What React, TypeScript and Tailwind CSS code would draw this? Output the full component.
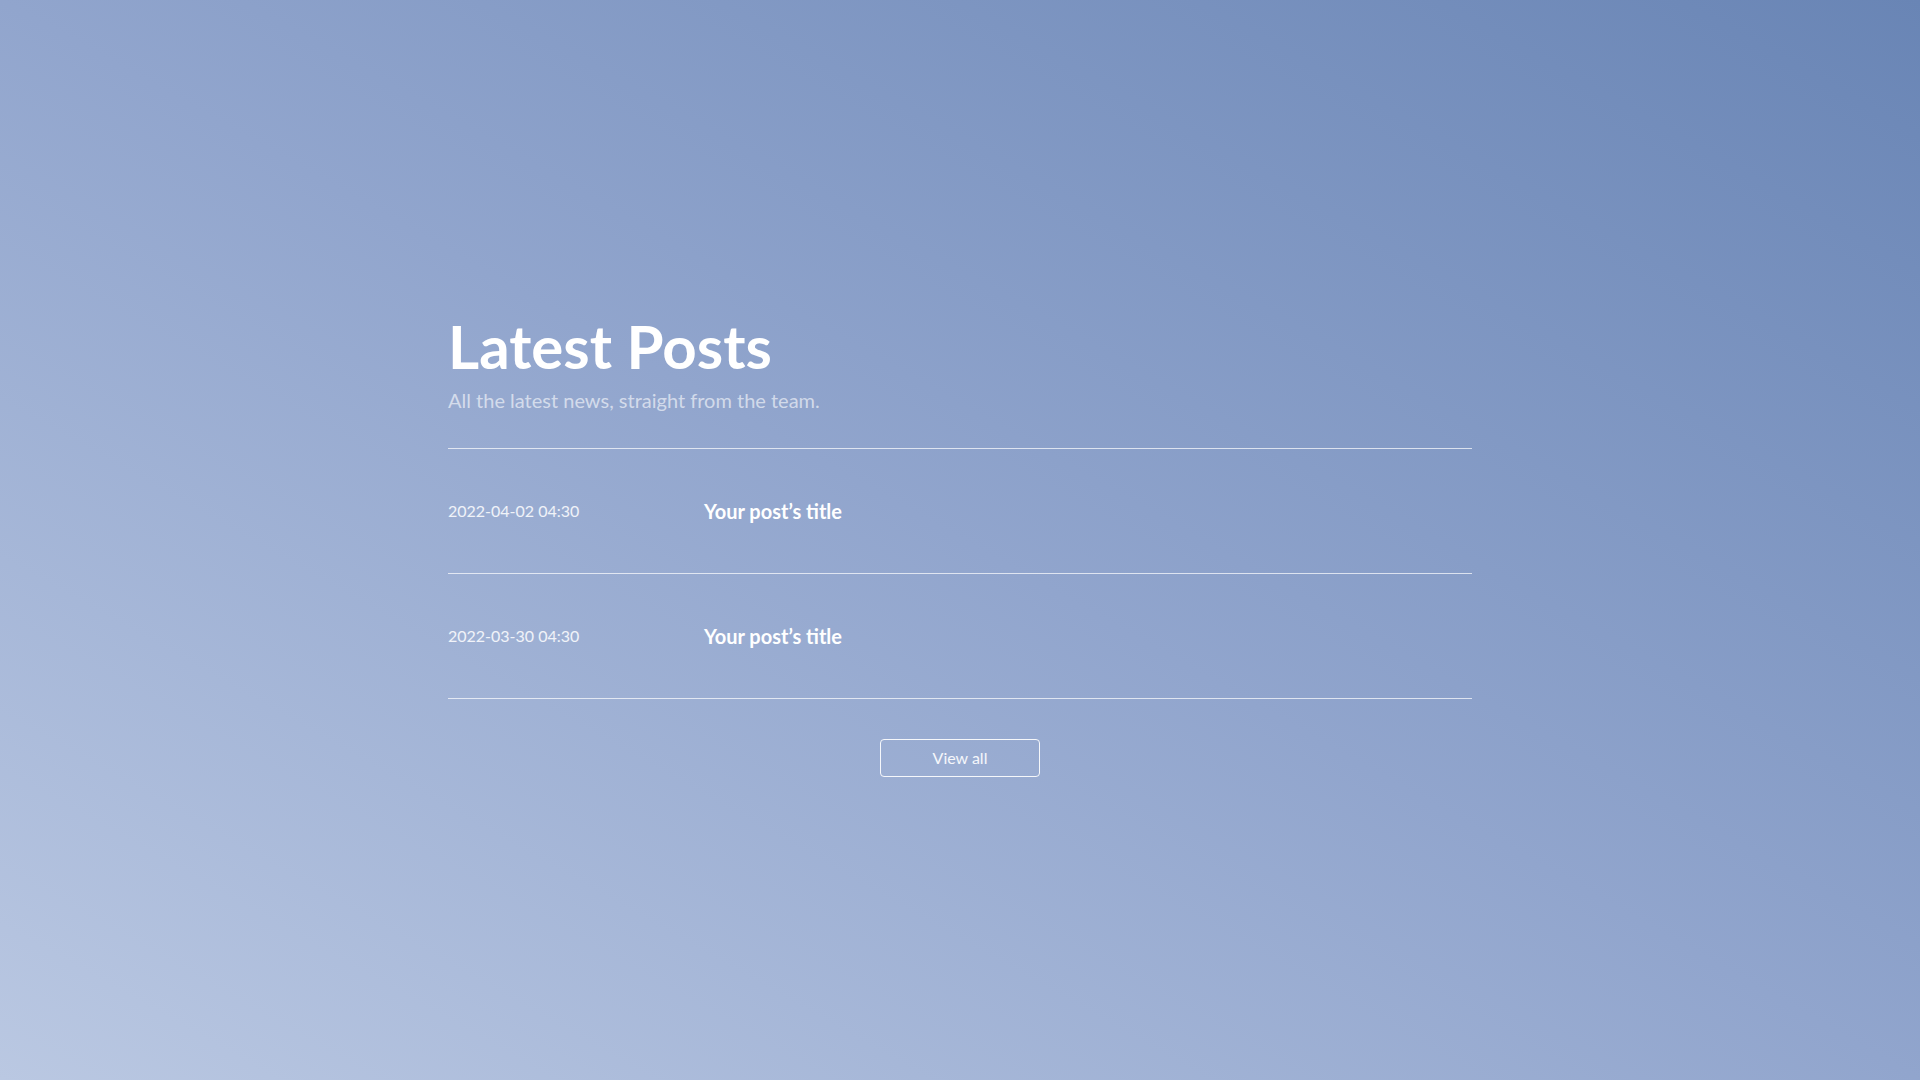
const posts = [
  { date: '2022-04-02 04:30', title: 'Your post’s title' },
  { date: '2022-03-30 04:30', title: 'Your post’s title' },
]

export default function App() {
  return (
    <div className="min-h-screen w-full pt-[13px] flex items-center justify-center bg-gradient-to-tr from-[#bac8e2] via-[#91a5cd] to-[#6985b5] font-['Lato','Noto_Sans',sans-serif] text-white">
      <section className="w-[1024px]">
        {/* Header */}
        <h1 className="text-[60px] leading-none font-bold tracking-normal">Latest Posts</h1>
        <p className="mt-[10px] text-xl leading-7 text-white/60">All the latest news, straight from the team.</p>

        {/* Posts */}
        <ul className="mt-[34px] border-t border-white/70">
          {posts.map((post, i) => (
            <li key={i} className="grid grid-cols-4 items-center py-12 border-b border-white/70">
              <span className="text-base leading-7 text-white/85">{post.date}</span>
              <a href="#" className="col-span-3 text-xl leading-7 font-bold">
                {post.title}
              </a>
            </li>
          ))}
        </ul>

        <div className="mt-10 flex justify-center">
          <a
            href="#"
            className="w-40 h-[38px] flex items-center justify-center rounded border border-white/90 text-base text-white/90"
          >
            View all
          </a>
        </div>
      </section>
    </div>
  )
}
